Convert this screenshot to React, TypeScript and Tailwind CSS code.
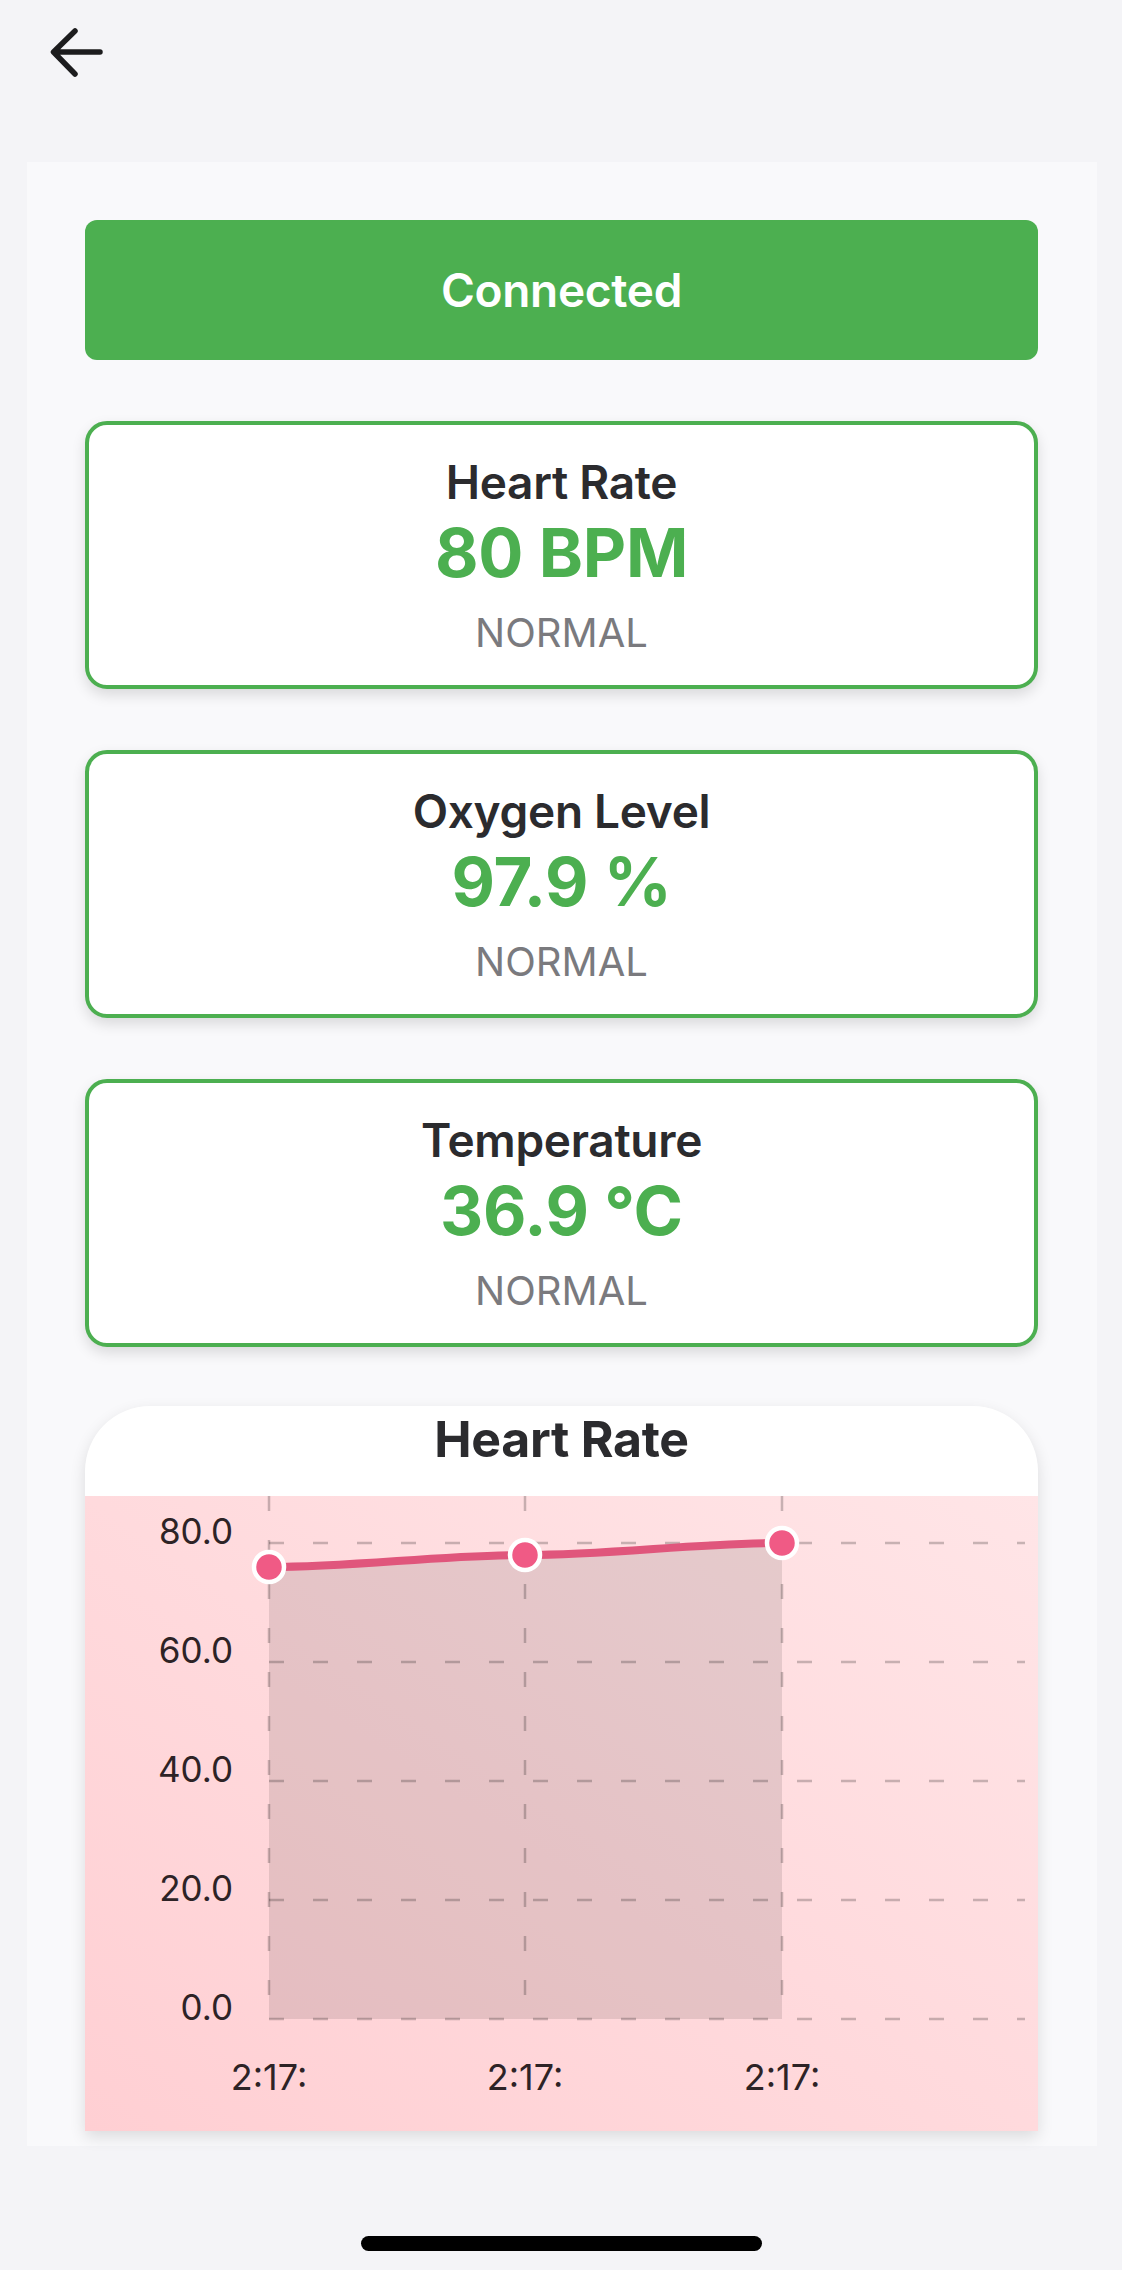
import React from "react";

function VitalCard({ title, value }: { title: string; value: string }) {
  return (
    <div className="h-[268px] rounded-[22px] border-[4px] border-[#4caf50] bg-white shadow-[0_6px_14px_rgba(0,0,0,0.13)] flex flex-col items-center pt-[31px]">
      <div className="text-[46px] leading-[52px] font-semibold text-[#2b2b2e] tracking-[-0.3px]">{title}</div>
      <div className="mt-[9px] text-[67px] leading-[72px] font-bold text-[#4caf50] tracking-[-0.3px]">{value}</div>
      <div className="mt-[21px] text-[40px] leading-[46px] text-[#7a7a7e]">NORMAL</div>
    </div>
  );
}

function Chart() {
  const pts = [
    [184, 71],
    [440, 59],
    [697, 47],
  ];
  const line = "M184,71 C270,71 354,59 440,59 C526,59 611,47 697,47";
  const area = line + " L697,523 L184,523 Z";
  const gridY = [47, 166, 285, 404, 523];
  const labelsY = ["80.0", "60.0", "40.0", "20.0", "0.0"];
  return (
    <div className="rounded-t-[65px] bg-white shadow-[0_6px_16px_rgba(0,0,0,0.12)] overflow-hidden">
      <div className="h-[90px] flex justify-center pt-[1px]">
        <div className="text-[50px] leading-[64px] font-bold text-[#2b2b2e] tracking-[-0.3px]">Heart Rate</div>
      </div>
      <div className="h-[635px] bg-linear-to-tr from-[#ffcfd3] to-[#ffe5e7]">
        <svg width="953" height="635" viewBox="0 0 953 635" className="block">
          <path d={area} fill="rgba(0,0,0,0.1)" />
          {gridY.map((y) => (
            <line key={"h" + y} x1={184} y1={y} x2={940} y2={y} stroke="rgba(0,0,0,0.22)" strokeWidth={2.5} strokeDasharray="15 29" />
          ))}
          {pts.map(([x]) => (
            <line key={"v" + x} x1={x} y1={0} x2={x} y2={523} stroke="rgba(0,0,0,0.22)" strokeWidth={2.5} strokeDasharray="15 29" />
          ))}
          {gridY.map((y, i) => (
            <text key={"l" + y} x={148} y={y + 1} textAnchor="end" fontFamily="Inter" fontSize={35} fill="#2d2326">
              {labelsY[i]}
            </text>
          ))}
          {pts.map(([x]) => (
            <text key={"x" + x} x={x} y={594} textAnchor="middle" fontFamily="Inter" fontSize={36} fill="#2d2326">
              2:17:
            </text>
          ))}
          <path d={line} fill="none" stroke="#e0567c" strokeWidth={8} strokeLinecap="round" />
          {pts.map(([x, y]) => (
            <circle key={"c" + x} cx={x} cy={y} r={15} fill="#f05a85" stroke="#ffffff" strokeWidth={4.5} />
          ))}
        </svg>
      </div>
    </div>
  );
}

export default function App() {
  return (
    <div className="min-h-[2270px] w-full bg-[#f4f4f7] font-['Inter',sans-serif] flex flex-col">
      <div className="h-[162px] pl-[50px] pt-[28px]">
        <svg width="54" height="50" viewBox="0 0 54 50" fill="none">
          <path d="M50 24 H5 M25 3 L3.5 24 L25 46" stroke="#1c1c1e" strokeWidth={5.5} strokeLinecap="round" strokeLinejoin="round" />
        </svg>
      </div>
      <div className="ml-[27px] mr-[25px] bg-[#f9f9fb] pt-[58px] pb-[15px] pl-[58px] pr-[59px] flex flex-col">
        <div className="h-[140px] rounded-[12px] bg-[#4caf50] flex items-center justify-center">
          <span className="text-[46px] font-semibold text-white tracking-[-0.3px]">Connected</span>
        </div>
        <div className="mt-[61px] flex flex-col gap-[61px]">
          <VitalCard title="Heart Rate" value="80 BPM" />
          <VitalCard title="Oxygen Level" value="97.9 %" />
          <VitalCard title="Temperature" value="36.9 °C" />
        </div>
        <div className="mt-[59px]">
          <Chart />
        </div>
      </div>
      <div className="mt-[90px] mx-auto w-[401px] h-[15px] rounded-full bg-black" />
    </div>
  );
}
